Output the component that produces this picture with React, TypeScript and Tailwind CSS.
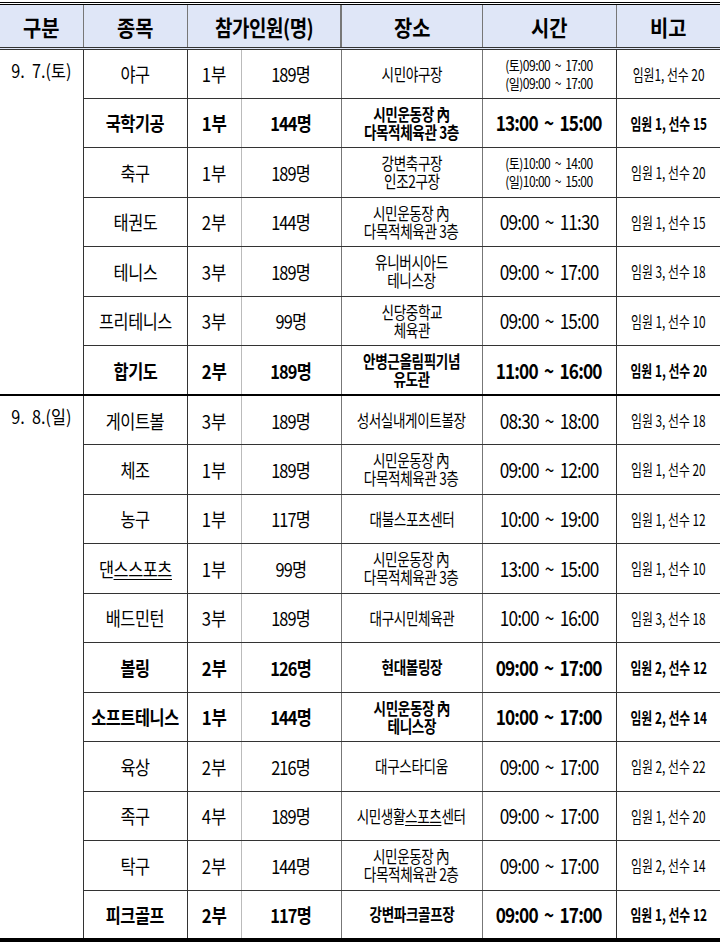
import type { ReactNode } from 'react';

type Row = {
  name: ReactNode;
  bu: string;
  count: string;
  place: ReactNode[];
  time: string | string[];
  note: string;
  bold?: boolean;
};

const DAY1: Row[] = [
  { name: '야구', bu: '1부', count: '189명', place: ['시민야구장'], time: ['(토)09:00  ~  17:00', '(일)09:00  ~  17:00'], note: '임원1, 선수 20' },
  { name: '국학기공', bu: '1부', count: '144명', place: ['시민운동장 內', '다목적체육관 3층'], time: '13:00  ~  15:00', note: '임원 1, 선수 15', bold: true },
  { name: '축구', bu: '1부', count: '189명', place: ['강변축구장', '인조2구장'], time: ['(토)10:00  ~  14:00', '(일)10:00  ~  15:00'], note: '임원 1, 선수 20' },
  { name: '태권도', bu: '2부', count: '144명', place: ['시민운동장 內', '다목적체육관 3층'], time: '09:00  ~  11:30', note: '임원 1, 선수 15' },
  { name: '테니스', bu: '3부', count: '189명', place: ['유니버시아드', '테니스장'], time: '09:00  ~  17:00', note: '임원 3, 선수 18' },
  { name: '프리테니스', bu: '3부', count: '99명', place: ['신당중학교', '체육관'], time: '09:00  ~  15:00', note: '임원 1, 선수 10' },
  { name: '합기도', bu: '2부', count: '189명', place: ['안병근올림픽기념', '유도관'], time: '11:00  ~  16:00', note: '임원 1, 선수 20', bold: true },
];

const DAY2: Row[] = [
  { name: '게이트볼', bu: '3부', count: '189명', place: ['성서실내게이트볼장'], time: '08:30  ~  18:00', note: '임원 3, 선수 18' },
  { name: '체조', bu: '1부', count: '189명', place: ['시민운동장 內', '다목적체육관 3층'], time: '09:00  ~  12:00', note: '임원 1, 선수 20' },
  { name: '농구', bu: '1부', count: '117명', place: ['대불스포츠센터'], time: '10:00  ~  19:00', note: '임원 1, 선수 12' },
  { name: <>댄<span className="underline underline-offset-2">스스포츠</span></>, bu: '1부', count: '99명', place: ['시민운동장 內', '다목적체육관 3층'], time: '13:00  ~  15:00', note: '임원 1, 선수 10' },
  { name: '배드민턴', bu: '3부', count: '189명', place: ['대구시민체육관'], time: '10:00  ~  16:00', note: '임원 3, 선수 18' },
  { name: '볼링', bu: '2부', count: '126명', place: ['현대볼링장'], time: '09:00  ~  17:00', note: '임원 2, 선수 12', bold: true },
  { name: '소프트테니스', bu: '1부', count: '144명', place: ['시민운동장 內', '테니스장'], time: '10:00  ~  17:00', note: '임원 2, 선수 14', bold: true },
  { name: '육상', bu: '2부', count: '216명', place: ['대구스타디움'], time: '09:00  ~  17:00', note: '임원 2, 선수 22' },
  { name: '족구', bu: '4부', count: '189명', place: [<>시민생활<span className="underline underline-offset-2">스포츠</span>센터</>], time: '09:00  ~  17:00', note: '임원 1, 선수 20' },
  { name: '탁구', bu: '2부', count: '144명', place: ['시민운동장 內', '다목적체육관 2층'], time: '09:00  ~  17:00', note: '임원 2, 선수 14' },
  { name: '피크골프', bu: '2부', count: '117명', place: ['강변파크골프장'], time: '09:00  ~  17:00', note: '임원 1, 선수 12', bold: true },
];

const td = 'border-b border-[#333] text-center align-middle p-0 whitespace-pre';

function Squeeze({ children, className }: { children: ReactNode; className: string }) {
  return <span className={`inline-block whitespace-pre ${className}`}>{children}</span>;
}

function DayRows({ date, rows }: { date: string; rows: Row[] }) {
  return (
    <>
      {rows.map((r, i) => {
        const w = r.bold ? 'font-bold' : 'font-normal';
        const top = i === 0 ? 'border-t-2 border-t-black' : '';
        return (
          <tr key={i} className="h-[49.5px]">
            {i === 0 && (
              <td rowSpan={rows.length} className="border-b-2 border-b-black border-t-2 border-t-black border-r border-r-[#333] align-top text-center p-0 pt-[11px]">
                <Squeeze className="text-[18px] scale-x-[0.9]">{date}</Squeeze>
              </td>
            )}
            <td className={`${td} ${top} border-r border-r-[#333]`}>
              <Squeeze className={`text-[19px] scale-x-[0.86] tracking-[-0.5px] ${w}`}>{r.name}</Squeeze>
            </td>
            <td className={`${td} ${top} border-r border-r-[#bbb]`}>
              <Squeeze className={`text-[19px] scale-x-[0.88] ${w}`}>{r.bu}</Squeeze>
            </td>
            <td className={`${td} ${top} border-r border-r-[#777]`}>
              <Squeeze className={`text-[19px] scale-x-[0.86] tracking-[-1px] ${w}`}>{r.count}</Squeeze>
            </td>
            <td className={`${td} ${top} border-r border-r-[#777]`}>
              <Squeeze className={`text-[17px] leading-[18px] scale-x-[0.8] tracking-[-0.5px] ${w}`}>
                {r.place.map((p, k) => (
                  <span key={k} className="block">{p}</span>
                ))}
              </Squeeze>
            </td>
            <td className={`${td} ${top} border-r border-r-[#333]`}>
              {Array.isArray(r.time) ? (
                <Squeeze className="text-[14px] leading-[18px] scale-x-[0.86] tracking-[-0.6px]">
                  {r.time.map((t, k) => (
                    <span key={k} className="block">{t}</span>
                  ))}
                </Squeeze>
              ) : (
                <Squeeze className={`text-[21px] scale-x-[0.82] tracking-[-1px] ${w}`}>{r.time}</Squeeze>
              )}
            </td>
            <td className={`${td} ${top}`}>
              <Squeeze className={`text-[16px] scale-x-[0.74] ${w}`}>{r.note}</Squeeze>
            </td>
          </tr>
        );
      })}
    </>
  );
}

export default function App() {
  const th = 'border-t-[3px] border-t-black border-b-[3px] border-b-[#333] border-double bg-[#dfe6f7] font-bold text-center p-0';
  return (
    <div className="w-[720px] h-[946px] bg-white pt-[2px] text-black font-['Noto_Sans_CJK_KR','Noto_Sans',sans-serif] leading-none">
      <table className="w-[720px] table-fixed border-collapse border-b-4 border-b-black">
        <colgroup>
          <col className="w-[83px]" />
          <col className="w-[104px]" />
          <col className="w-[54px]" />
          <col className="w-[100px]" />
          <col className="w-[141px]" />
          <col className="w-[134px]" />
          <col className="w-[104px]" />
        </colgroup>
        <thead>
          <tr className="h-[45px]">
            <th className={`${th} border-r border-r-[#777]`}>
              <Squeeze className="text-[22px] scale-x-[0.9]">구분</Squeeze>
            </th>
            <th className={`${th} border-r border-r-[#777]`}>
              <Squeeze className="text-[22px] scale-x-[0.9]">종목</Squeeze>
            </th>
            <th colSpan={2} className={`${th} border-r-2 border-r-[#777]`}>
              <Squeeze className="text-[22px] scale-x-[0.86] tracking-[-0.5px]">참가인원(명)</Squeeze>
            </th>
            <th className={`${th} border-r border-r-[#777]`}>
              <Squeeze className="text-[22px] scale-x-[0.9]">장소</Squeeze>
            </th>
            <th className={`${th} border-r border-r-[#777]`}>
              <Squeeze className="text-[22px] scale-x-[0.9]">시간</Squeeze>
            </th>
            <th className={th}>
              <Squeeze className="text-[22px] scale-x-[0.9]">비고</Squeeze>
            </th>
          </tr>
        </thead>
        <tbody>
          <DayRows date="9.  7.(토)" rows={DAY1} />
          <DayRows date="9.  8.(일)" rows={DAY2} />
        </tbody>
      </table>
    </div>
  );
}
